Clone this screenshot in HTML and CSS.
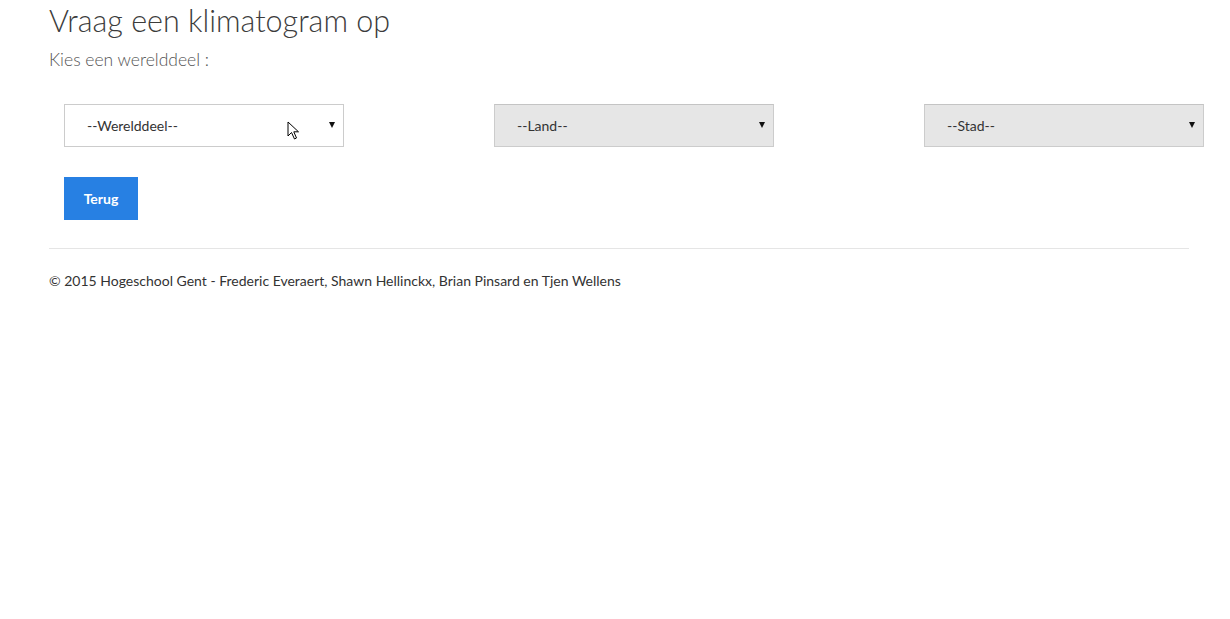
FILE: index.html
```html
<!DOCTYPE html>
<html lang="nl">
<head>
<meta charset="utf-8">
<title>Klimatogram</title>
<link rel="stylesheet" href="styles.css">
</head>
<body>
<div class="container">
  <h1 class="title">Vraag een klimatogram op</h1>
  <p class="subtitle">Kies een werelddeel :</p>
  <div class="selects">
    <div class="select">
      <span class="select-text">--Werelddeel--</span>
      <span class="arrow"></span>
      <svg class="cursor" width="14" height="20" viewBox="0 0 14 20"><path d="M1 1 L1 15 L4.5 11.5 L7.5 18 L9.5 17 L6.8 10.8 L11.5 10.8 Z" fill="#fff" stroke="#000" stroke-width="1" stroke-linejoin="miter"/></svg>
    </div>
    <div class="select disabled">
      <span class="select-text">--Land--</span>
      <span class="arrow"></span>
    </div>
    <div class="select disabled">
      <span class="select-text">--Stad--</span>
      <span class="arrow"></span>
    </div>
  </div>
  <div class="actions">
    <button class="btn">Terug</button>
  </div>
  <hr class="rule">
  <footer class="footer">© 2015 Hogeschool Gent - Frederic Everaert, Shawn Hellinckx, Brian Pinsard en Tjen Wellens</footer>
</div>
</body>
</html>
```
FILE: styles.css
```css
html, body {
  margin: 0;
  padding: 0;
  background: #fff;
}
body {
  font-family: "Lato", "Open Sans", "Liberation Sans", sans-serif;
  color: #333;
}
.container {
  width: 1140px;
  margin-left: 49px;
}
.title {
  margin: 0;
  padding-top: 1px;
  font-size: 30.5px;
  line-height: 38px;
  font-weight: 300;
  color: #3c3c3c;
}
.subtitle {
  margin: 10px 0 0 0;
  font-size: 17.5px;
  line-height: 22px;
  font-weight: 300;
  color: #555;
}
.selects {
  display: flex;
  gap: 150px;
  margin-top: 33px;
  padding-left: 15px;
}
.select {
  position: relative;
  flex: 0 0 auto;
  box-sizing: border-box;
  width: 280px;
  height: 43px;
  border: 1px solid #ccc;
  background: #fff;
  display: flex;
  align-items: center;
  padding-left: 22px;
  font-size: 14px;
  color: #333;
}
.select.disabled {
  background: #e6e6e6;
  border-color: #ccc;
  border-top-color: #c4c4c4;
}
.select-text {
  line-height: 20px;
}
.arrow {
  position: absolute;
  right: 8px;
  top: 17px;
  width: 0;
  height: 0;
  border-left: 3.5px solid transparent;
  border-right: 3.5px solid transparent;
  border-top: 6px solid #111;
}
.cursor {
  position: absolute;
  left: 222px;
  top: 16px;
}
.actions {
  margin-top: 30px;
  padding-left: 15px;
}
.btn {
  width: 74px;
  height: 43px;
  border: 0;
  background: #2780e3;
  color: #fff;
  font-family: inherit;
  font-size: 14px;
  font-weight: 700;
  padding: 0;
}
.rule {
  margin: 28px 0 0 0;
  border: 0;
  border-top: 1px solid #e5e5e5;
  height: 0;
}
.footer {
  margin-top: 23px;
  font-size: 14px;
  line-height: 18px;
  color: #333;
}
```
